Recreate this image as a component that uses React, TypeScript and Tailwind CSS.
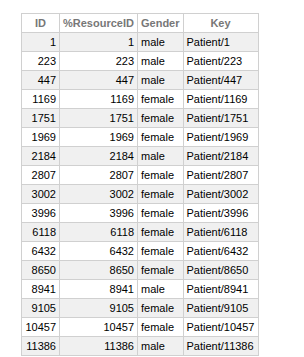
const rows: [number, string][] = [
  [1, 'male'],
  [223, 'male'],
  [447, 'male'],
  [1169, 'female'],
  [1751, 'female'],
  [1969, 'female'],
  [2184, 'male'],
  [2807, 'female'],
  [3002, 'female'],
  [3996, 'female'],
  [6118, 'female'],
  [6432, 'female'],
  [8650, 'female'],
  [8941, 'male'],
  [9105, 'female'],
  [10457, 'female'],
  [11386, 'male'],
];

export default function App() {
  return (
    <div className="h-[357px] w-[304px] overflow-hidden bg-white pl-[21px] pt-[13px] font-['Liberation_Sans',Arial,sans-serif] text-[11px] text-black">
      <table className="table-fixed border-collapse">
        <thead>
          <tr className="h-[19px]">
            <th className="w-[38px] border border-[#d0d0d0] px-[3px] py-0 text-center font-bold text-[#777]">ID</th>
            <th className="w-[78px] border border-[#d0d0d0] px-[3px] py-0 text-center font-bold text-[#777]">%ResourceID</th>
            <th className="w-[45px] border border-[#d0d0d0] px-[3px] py-0 text-center font-bold text-[#777]">Gender</th>
            <th className="w-[75px] border border-[#d0d0d0] px-[3px] py-0 text-center font-bold text-[#777]">Key</th>
          </tr>
        </thead>
        <tbody>
          {rows.map(([id, gender], i) => (
            <tr key={id} className={`h-[19px] ${i % 2 === 0 ? 'bg-[#f0f0f0]' : 'bg-white'}`}>
              <td className="border border-[#d0d0d0] px-[3px] py-0 text-right">{id}</td>
              <td className="border border-[#d0d0d0] px-[3px] py-0 text-right">{id}</td>
              <td className="border border-[#d0d0d0] px-[3px] py-0 text-left">{gender}</td>
              <td className="whitespace-nowrap border border-[#d0d0d0] px-[3px] py-0 text-left">Patient/{id}</td>
            </tr>
          ))}
        </tbody>
      </table>
    </div>
  );
}
